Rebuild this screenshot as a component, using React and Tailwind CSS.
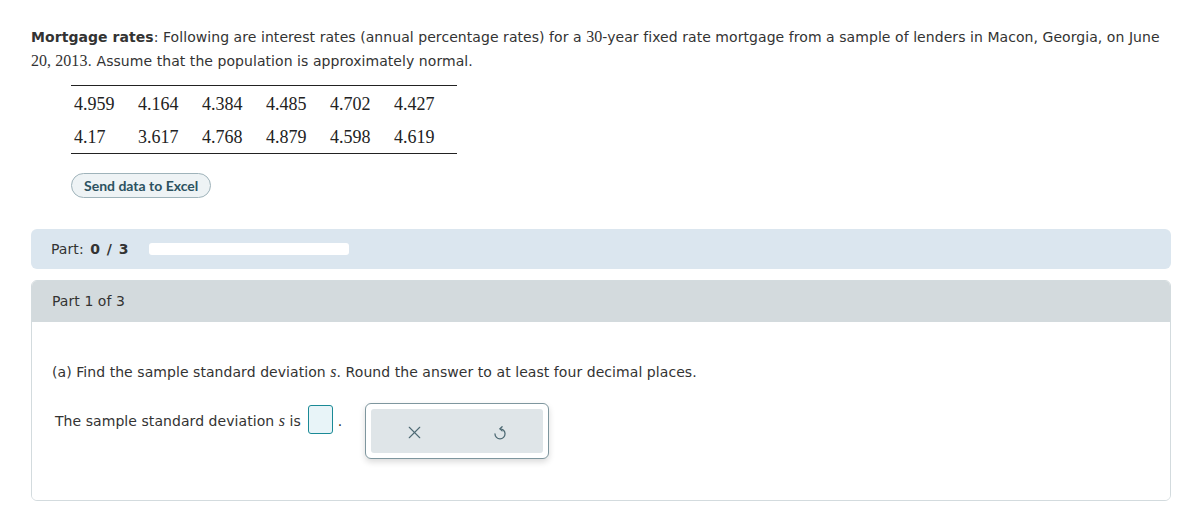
import { X } from 'lucide-react'

const rows = [
  ['4.959', '4.164', '4.384', '4.485', '4.702', '4.427'],
  ['4.17', '3.617', '4.768', '4.879', '4.598', '4.619'],
]

// math-style bits (numbers, variables) are set in a serif face
const Num = ({ children }) => (
  <span className="font-['Liberation_Serif'] text-[16px]">{children}</span>
)
const Var = ({ children }) => (
  <span className="font-['Liberation_Serif'] italic text-[16px]">{children}</span>
)

const UndoIcon = () => (
  <svg width="22" height="22" viewBox="0 0 24 24" fill="none" stroke="currentColor" strokeWidth="1.4" strokeLinecap="round" strokeLinejoin="round">
    <path d="M12 8.5a5.5 5.5 0 1 1 -5.5 5.5" />
    <path d="M14.3 6.2 12 8.5l2.3 2.3" />
  </svg>
)

export default function App() {
  return (
    <div className="min-h-screen bg-white text-[#333] font-['DejaVu_Sans'] text-[14px] tracking-[0.06px]">
      <div className="w-[1140px] ml-[31px] pt-[25px]">
        <p className="leading-[24px]">
          <b>Mortgage rates</b>: Following are interest rates (annual percentage rates) for a <Num>30</Num>-year fixed rate mortgage from a sample of lenders in Macon, Georgia, on June <Num>20, 2013</Num>. Assume that the population is approximately normal.
        </p>

        <table className="ml-[40px] mt-[12px] border-y border-[#222] border-collapse font-['Liberation_Serif'] text-[18px] text-[#222] tracking-normal">
          <tbody>
            <tr>
              {rows[0].map((v, j) => (
                <td key={j} className="w-[64px] pl-[3px] pt-[6px] pb-[4px] leading-[24px]">{v}</td>
              ))}
              <td className="w-[2px]" />
            </tr>
            <tr>
              {rows[1].map((v, j) => (
                <td key={j} className="w-[64px] pl-[3px] pt-[5px] pb-[4px] leading-[24px]">{v}</td>
              ))}
              <td className="w-[2px]" />
            </tr>
          </tbody>
        </table>

        <button className="ml-[40px] mt-[19px] h-[25px] px-[12px] rounded-full border border-[#9fb3ba] bg-[#eef3f5] text-[#2c5261] font-['Lato'] font-bold text-[14px] tracking-normal">
          Send data to Excel
        </button>

        <div className="mt-[31px] h-[40px] rounded-[6px] bg-[#dbe6ef] flex items-center px-[20px]">
          <span>Part: <b className="ml-[2px] tracking-[1px]">0 / 3</b></span>
          <div className="ml-[19px] w-[200px] h-[12px] rounded-[3px] bg-white" />
        </div>

        <div className="mt-[11px] rounded-[6px] border border-[#d3dbde] overflow-hidden">
          <div className="h-[41px] bg-[#d3dadd] flex items-center px-[20px]">Part 1 of 3</div>
          <div className="h-[178px] bg-white px-[20px] pt-[40px]">
            <p className="leading-[20px]">(a) Find the sample standard deviation <Var>s</Var>. Round the answer to at least four decimal places.</p>
            <div className="mt-[21px] flex items-start">
              <span className="ml-[3px] mt-[8px] leading-[20px]">The sample standard deviation <Var>s</Var> is</span>
              <div className="ml-[7px] mt-[2px] w-[25px] h-[29px] rounded-[3px] border border-[#1a8a96] bg-[#e8f4f8]" />
              <span className="ml-[5px] mt-[8px] leading-[20px]">.</span>
              <div className="ml-[23px] w-[184px] h-[56px] rounded-[6px] border border-[#7e969e] bg-white p-[5px] shadow-[0_3px_6px_rgba(0,0,0,0.15)]">
                <div className="h-full rounded-[3px] bg-[#dfe5e8] flex items-center justify-around text-[#4e6a74]">
                  <X size={21} strokeWidth={1.3} className="mt-[3px]" />
                  <span className="mt-[2px]"><UndoIcon /></span>
                </div>
              </div>
            </div>
          </div>
        </div>
      </div>
    </div>
  )
}
